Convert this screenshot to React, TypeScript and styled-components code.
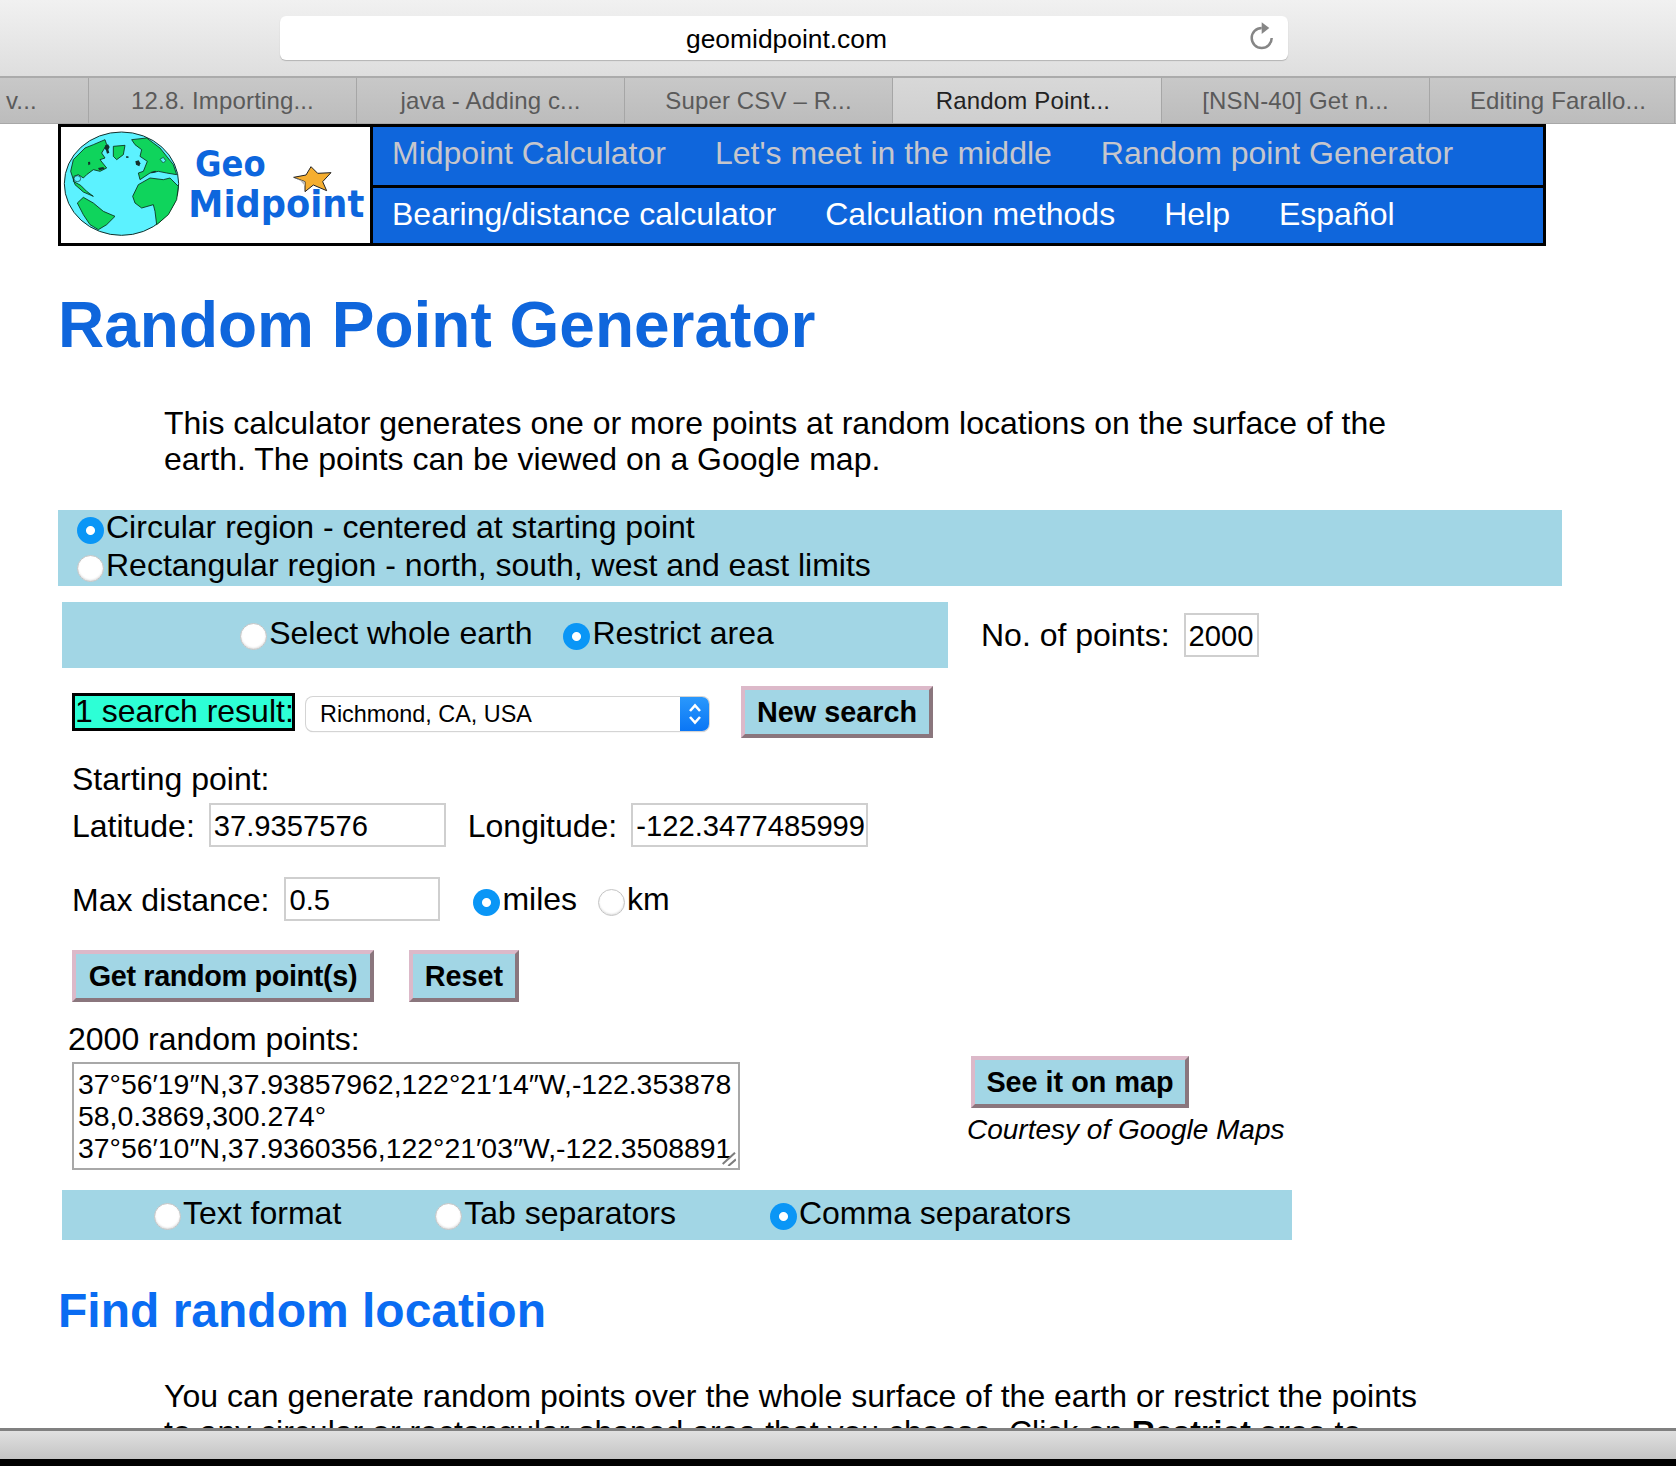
import React from 'react';
import styled, { createGlobalStyle } from 'styled-components';

const GlobalStyle = createGlobalStyle`
  html, body {
    margin: 0;
    padding: 0;
    background: #fff;
    font-family: "Liberation Sans", Arial, sans-serif;
    color: #000;
  }
`;

const Window = styled.div`
  width: 1676px;
  height: 1466px;
  display: flex;
  flex-direction: column;
  overflow: hidden;
`;

/* browser chrome */
const Toolbar = styled.div`
  height: 76px;
  flex: none;
  position: relative;
  background: linear-gradient(#f1f1f1, #dedede);
`;

const AddressBar = styled.div`
  position: absolute;
  left: 280px;
  top: 16px;
  width: 1008px;
  height: 44px;
  border-radius: 6px;
  background: #fff;
  box-shadow: 0 1px 1px #b4b4b4;
  display: flex;
  align-items: center;
  justify-content: center;
  font-size: 26.4px;
  padding: 2px 0 0 5px;
  box-sizing: border-box;
`;

const Reload = styled.svg`
  position: absolute;
  right: 12px;
  top: 6px;
`;

const TabBar = styled.div`
  height: 48px;
  flex: none;
  display: flex;
  box-sizing: border-box;
  border-top: 2px solid #ababab;
  border-bottom: 1px solid #a8a8a8;
  background: linear-gradient(#c8c8c8, #bcbcbc);
`;

const Tab = styled.div<{ $width: number; $active?: boolean; $flush?: boolean; $shift?: number }>`
  width: ${p => p.$width}px;
  flex: none;
  box-sizing: border-box;
  display: flex;
  align-items: center;
  justify-content: ${p => (p.$flush ? 'flex-start' : 'center')};
  padding-left: ${p => (p.$flush ? '6px' : `${Math.max(p.$shift ?? 0, 0)}px`)};
  padding-right: ${p => Math.max(-(p.$shift ?? 0), 0)}px;
  border-right: 1px solid #a6a6a6;
  font-size: 24px;
  letter-spacing: 0.15px;
  color: ${p => (p.$active ? '#222' : '#5a5a5a')};
  background: ${p => (p.$active ? 'linear-gradient(#d8d8d8, #cfcfcf)' : 'none')};
`;

const Viewport = styled.div`
  flex: 1;
  min-height: 0;
  overflow: hidden;
  padding-left: 58px;
  background: #fff;
`;

const BottomBar = styled.div`
  height: 31px;
  flex: none;
  box-sizing: border-box;
  border-top: 3px solid #808080;
  background: linear-gradient(#e0e0e0, #c4c4c4);
`;

const BlackStrip = styled.div`
  height: 7px;
  flex: none;
  background: #000;
`;

/* site header */
const Header = styled.div`
  width: 1488px;
  height: 122px;
  box-sizing: border-box;
  border: 3px solid #000;
  display: flex;
`;

const LogoCell = styled.div`
  width: 312px;
  flex: none;
  box-sizing: border-box;
  background: #fff;
  border-right: 3px solid #000;
`;

const Nav = styled.div`
  flex: 1;
  display: flex;
  flex-direction: column;
  background: #0f66dc;
`;

const NavRow = styled.div<{ $visited?: boolean }>`
  flex: 1;
  box-sizing: border-box;
  display: flex;
  align-items: center;
  gap: 49px;
  padding: 0 0 4px 19px;
  font-size: 32px;
  color: ${p => (p.$visited ? '#c6c6cc' : '#fff')};
  & + & {
    border-top: 3px solid #000;
    padding-bottom: 2px;
  }
`;

/* page content */
const Title = styled.h1`
  margin: 47px 0 0;
  font-size: 64px;
  line-height: 64px;
  font-weight: bold;
  color: #0f66dc;
`;

const Paragraph = styled.p<{ $top: number }>`
  margin: ${p => p.$top}px 0 0 106px;
  width: 1270px;
  font-size: 32px;
  line-height: 36px;
`;

const Band = styled.div`
  background: #a2d6e5;
  font-size: 32px;
`;

const RegionBand = styled(Band)`
  margin-top: 33px;
  width: 1504px;
  height: 76px;
  padding-left: 19px;
  box-sizing: border-box;
`;

const RegionLine = styled.div`
  display: flex;
  height: 38px;
  & > label {
    margin-top: -1px;
    height: 36px;
  }
`;

const AreaRow = styled.div`
  margin: 16px 0 0 4px;
  display: flex;
  align-items: center;
  font-size: 32px;
`;

const AreaBand = styled(Band)`
  width: 886px;
  height: 66px;
  box-sizing: border-box;
  display: flex;
  align-items: center;
  justify-content: center;
  gap: 31px;
  padding: 0 0 4px 4px;
  margin-right: 33px;
`;

const Option = styled.label<{ $left?: number }>`
  display: flex;
  align-items: center;
  line-height: 36px;
  margin-left: ${p => p.$left ?? 0}px;
`;

const Radio = styled.input.attrs({ type: 'radio', readOnly: true })`
  appearance: none;
  flex: none;
  width: 27px;
  height: 27px;
  margin: 6px 2px 0 0;
  border-radius: 50%;
  box-sizing: border-box;
  background: #fff;
  border: 1px solid #c4c4c4;
  box-shadow: inset 0 -1px 2px #ddd;
  &:checked {
    border: none;
    box-shadow: none;
    background: radial-gradient(circle, #fff 0 4px, #0a96f6 5px);
  }
`;

const TextInput = styled.input<{ $width: number; $left: number }>`
  width: ${p => p.$width}px;
  height: 44px;
  margin-left: ${p => p.$left}px;
  box-sizing: border-box;
  border: 2px solid #cfcfcf;
  padding: 3px 2px 0 3px;
  font-family: inherit;
  font-size: 29.2px;
  color: #000;
  background: #fff;
  outline: none;
`;

const SearchRow = styled.div`
  margin: 18px 0 0 14px;
  display: flex;
  align-items: center;
`;

const ResultBadge = styled.div`
  width: 223px;
  height: 38px;
  box-sizing: border-box;
  border: 3px solid #000;
  background: #2dffd6;
  font-size: 32px;
  line-height: 30px;
  white-space: nowrap;
  overflow: hidden;
`;

const SelectBox = styled.div`
  width: 403px;
  height: 34px;
  margin: 3px 32px 0 11px;
  box-sizing: border-box;
  display: flex;
  align-items: center;
  justify-content: space-between;
  padding-left: 14px;
  font-size: 23.4px;
  border-radius: 7px;
  background: #fff;
  box-shadow: 0 0 0 1px #d4d4d4, 0 1px 1px #bbb;
  overflow: hidden;
`;

const SelectValue = styled.span`
  padding-top: 2px;
`;

const Stepper = styled.div`
  width: 29px;
  height: 34px;
  display: flex;
  align-items: center;
  justify-content: center;
  background: linear-gradient(#2a98fc, #0a76f5);
`;

const BevelButton = styled.button<{ $width: number; $left?: number; $tight?: boolean }>`
  width: ${p => p.$width}px;
  height: 52px;
  flex: none;
  box-sizing: border-box;
  padding: 0;
  margin-left: ${p => p.$left ?? 0}px;
  border-style: solid;
  border-width: 4px;
  border-color: #dcb9c9 #8a767d #8a767d #dcb9c9;
  background: #a2d6e5;
  font-family: inherit;
  font-size: 28.8px;
  font-weight: bold;
  letter-spacing: ${p => (p.$tight ? '-0.35px' : '0')};
  color: #000;
`;

const Line = styled.div<{ $top: number; $left?: number }>`
  margin: ${p => p.$top}px 0 0 ${p => p.$left ?? 14}px;
  font-size: 32px;
  line-height: 36px;
`;

const FormRow = styled.div<{ $top: number }>`
  margin: ${p => p.$top}px 0 0 14px;
  display: flex;
  align-items: center;
  font-size: 32px;
`;

const FieldLabel = styled.span<{ $left?: number }>`
  margin-left: ${p => p.$left ?? 0}px;
  padding-top: 2px;
`;

const ResultRow = styled.div`
  margin: -1px 0 0 14px;
  display: flex;
  align-items: flex-start;
`;

const AreaWrap = styled.div`
  position: relative;
  margin-top: 6px;
`;

const ResultArea = styled.textarea`
  display: block;
  width: 668px;
  height: 108px;
  box-sizing: border-box;
  border: 2px solid #a8a8a8;
  padding: 4px 4px;
  font-family: inherit;
  font-size: 28.4px;
  line-height: 32px;
  color: #000;
  overflow: hidden;
  outline: none;
  resize: none;
`;

const ResizeGrip = styled.svg`
  position: absolute;
  right: 4px;
  bottom: 4px;
`;

const MapColumn = styled.div`
  margin-left: 231px;
`;

const Courtesy = styled.div`
  margin: 4px 0 0 -4px;
  font-size: 28px;
  font-style: italic;
  line-height: 36px;
  white-space: nowrap;
`;

const FormatBand = styled(Band)`
  margin: 20px 0 0 4px;
  width: 1230px;
  height: 50px;
  padding: 0 0 4px 92px;
  box-sizing: border-box;
  display: flex;
  align-items: center;
  gap: 94px;
`;

const SubTitle = styled.h2`
  margin: 45px 0 0;
  font-size: 48px;
  line-height: 52px;
  font-weight: bold;
  color: #0a6cf2;
`;

const tabs = ['12.8. Importing...', 'java - Adding c...', 'Super CSV \u2013 R...', 'Random Point...', '[NSN-40] Get n...'];

const points = [
  '37\u00b056\u203219\u2033N,37.93857962,122\u00b021\u203214\u2033W,-122.353878',
  '58,0.3869,300.274\u00b0',
  '37\u00b056\u203210\u2033N,37.9360356,122\u00b021\u203203\u2033W,-122.3508891'
].join('\n');

const GeoLogo = () => (
  <svg width="309" height="116" viewBox="18 21 927 348">
    <g transform="translate(15 24)">
      <ellipse cx="184.5" cy="167" rx="171.5" ry="155" fill="#5cf2ff" stroke="#14302c" strokeWidth="3" />
      <g fill="#0fd45c" stroke="#0b2a18" strokeWidth="2.5" strokeLinejoin="round">
        <path d="M32 130 L40 95 L75 60 L100 50 L135 35 L140 50 L125 75 L135 90 L120 95 L140 120 L120 130 L100 125 L80 140 L70 150 L55 140 L42 145 L40 160 L62 172 L80 190 L100 205 L70 192 L45 170 Z" />
        <path d="M160 55 L195 52 L190 80 L170 95 L160 85 Z" />
        <path d="M215 35 L260 30 L300 60 L340 110 L350 140 L320 135 L295 130 L270 135 L240 155 L235 135 L250 130 L262 100 L240 85 L245 65 L225 50 Z" />
        <path d="M218 205 L235 170 L270 150 L310 155 L330 150 L355 175 L350 215 L325 260 L290 290 L285 250 L280 230 L245 240 L225 225 Z" />
        <path d="M52 225 L70 208 L100 225 L130 250 L165 265 L140 290 L115 305 L90 290 L70 260 Z" />
      </g>
      <g fill="#14302c">
        <path d="M136 52 l8 -3 l5 8 l-4 8 l3 9 l-7 3 l-3 -10 l-5 -6 Z" />
        <path d="M226 100 l10 -3 l5 9 l-3 9 l-10 -5 Z" />
        <path d="M114 120 l16 -3 l4 6 l-16 4 Z" />
        <path d="M84 102 l6 -1 l1 8 l-6 3 Z" />
        <path d="M198 85 l7 0 l1 4 l-7 1 Z" />
        <path d="M272 132 l14 -4 l3 4 l-13 4 Z" />
      </g>
      <g fill="#5cf2ff" stroke="#14302c" strokeWidth="2">
        <ellipse cx="52" cy="152" rx="10" ry="9" />
        <path d="M300 94 l10 -6 l7 10 l-7 7 Z" />
      </g>
    </g>
    <text x="420" y="168" fontFamily="DejaVu Sans" fontWeight="bold" fontSize="108" fill="#0d66dd" textLength="212" lengthAdjust="spacingAndGlyphs">Geo</text>
    <polygon points="768,140 788,160 828,158 803,185 815,212 775,195 750,215 750,185 716,172 753,165" fill="#f5ae30" stroke="#222" strokeWidth="3" strokeLinejoin="round" />
    <polygon points="716,172 750,185 750,198 736,182" fill="#b8b8b8" />
    <text x="400" y="290" fontFamily="DejaVu Sans" fontWeight="bold" fontSize="110" fill="#0d66dd" textLength="528" lengthAdjust="spacingAndGlyphs">Midpoint</text>
  </svg>
);

const App: React.FC = () => (
  <Window>
    <GlobalStyle />
    <Toolbar>
      <AddressBar>
        geomidpoint.com
        <Reload width="26" height="30" viewBox="0 0 26 30" fill="none">
          <path d="M11.7 6 A10 10 0 1 0 21.7 16" stroke="#868686" strokeWidth="2.5" />
          <path d="M11.7 0.3 L11.7 12 L19.3 6 Z" fill="#868686" />
        </Reload>
      </AddressBar>
    </Toolbar>
    <TabBar>
      <Tab $width={89} $flush>v...</Tab>
      {tabs.map((t, i) => (
        <Tab key={i} $width={i === 3 ? 269 : 268} $active={i === 3} $shift={i === 3 ? -8 : 0}>{t}</Tab>
      ))}
      <Tab $width={245} $shift={12}>Editing Farallo...</Tab>
    </TabBar>
    <Viewport>
      <Header>
        <LogoCell><GeoLogo /></LogoCell>
        <Nav>
          <NavRow $visited>
            <span>Midpoint Calculator</span>
            <span>Let's meet in the middle</span>
            <span>Random point Generator</span>
          </NavRow>
          <NavRow>
            <span>Bearing/distance calculator</span>
            <span>Calculation methods</span>
            <span>Help</span>
            <span>Español</span>
          </NavRow>
        </Nav>
      </Header>

      <Title>Random Point Generator</Title>
      <Paragraph $top={48}>
        This calculator generates one or more points at random locations on the surface of the earth. The points can be viewed on a Google map.
      </Paragraph>

      <RegionBand>
        <RegionLine><Option><Radio name="region" defaultChecked />Circular region - centered at starting point</Option></RegionLine>
        <RegionLine><Option><Radio name="region" />Rectangular region - north, south, west and east limits</Option></RegionLine>
      </RegionBand>

      <AreaRow>
        <AreaBand>
          <Option><Radio name="area" />Select whole earth</Option>
          <Option><Radio name="area" defaultChecked />Restrict area</Option>
        </AreaBand>
        <span>No. of points:</span>
        <TextInput $width={75} $left={14} defaultValue="2000" />
      </AreaRow>

      <SearchRow>
        <ResultBadge>1 search result:</ResultBadge>
        <SelectBox>
          <SelectValue>Richmond, CA, USA</SelectValue>
          <Stepper>
            <svg width="14" height="26" viewBox="0 0 14 26" fill="none" stroke="#fff" strokeWidth="2.6">
              <path d="M2 10 L7 4.5 L12 10" />
              <path d="M2 16 L7 21.5 L12 16" />
            </svg>
          </Stepper>
        </SelectBox>
        <BevelButton $width={192}>New search</BevelButton>
      </SearchRow>

      <Line $top={23}>Starting point:</Line>
      <FormRow $top={6}>
        <FieldLabel>Latitude:</FieldLabel>
        <TextInput $width={237} $left={14} defaultValue="37.9357576" />
        <FieldLabel $left={22}>Longitude:</FieldLabel>
        <TextInput $width={237} $left={14} defaultValue="-122.3477485999" />
      </FormRow>
      <FormRow $top={30}>
        <FieldLabel>Max distance:</FieldLabel>
        <TextInput $width={156} $left={15} defaultValue="0.5" />
        <Option $left={33}><Radio name="unit" defaultChecked />miles</Option>
        <Option $left={21}><Radio name="unit" />km</Option>
      </FormRow>
      <FormRow $top={29}>
        <BevelButton $width={302} $tight>Get random point(s)</BevelButton>
        <BevelButton $width={110} $left={35}>Reset</BevelButton>
      </FormRow>

      <Line $top={19} $left={10}>2000 random points:</Line>
      <ResultRow>
        <AreaWrap>
          <ResultArea wrap="off" defaultValue={points} />
          <ResizeGrip width="14" height="14" viewBox="0 0 14 14" stroke="#7c7c7c" strokeWidth="2">
            <path d="M0.7 12 L13 0.7" />
            <path d="M6.3 14 L14 7.3" />
          </ResizeGrip>
        </AreaWrap>
        <MapColumn>
          <BevelButton $width={218}>See it on map</BevelButton>
          <Courtesy>Courtesy of Google Maps</Courtesy>
        </MapColumn>
      </ResultRow>

      <FormatBand>
        <Option><Radio name="format" />Text format</Option>
        <Option><Radio name="format" />Tab separators</Option>
        <Option><Radio name="format" defaultChecked />Comma separators</Option>
      </FormatBand>

      <SubTitle>Find random location</SubTitle>
      <Paragraph $top={41}>
        You can generate random points over the whole surface of the earth or restrict the points to any circular or rectangular shaped area that you choose. Click on <b>Restrict area</b> to
      </Paragraph>
    </Viewport>
    <BottomBar />
    <BlackStrip />
  </Window>
);

export default App;
